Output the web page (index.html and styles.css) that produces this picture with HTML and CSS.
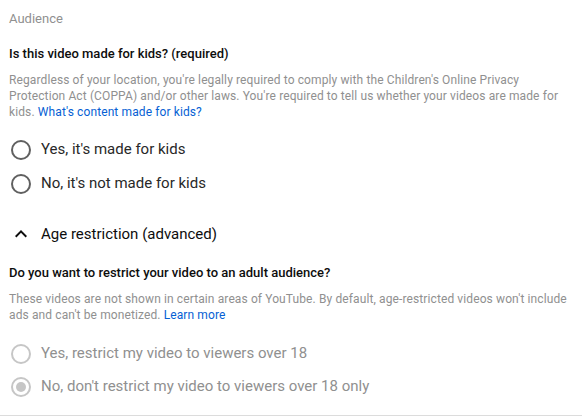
FILE: index.html
```html
<!DOCTYPE html>
<html>
<head>
<meta charset="utf-8">
<link rel="stylesheet" href="styles.css">
</head>
<body>
<div class="page">
  <div class="section-label">Audience</div>

  <h2 class="question">Is this video made for kids? (required)</h2>
  <p class="desc">Regardless of your location, you're legally required to comply with the Children's Online Privacy Protection Act (COPPA) and/or other laws. You're required to tell us whether your videos are made for kids. <a class="link" href="#">What's content made for kids?</a></p>

  <div class="radios kids">
    <div class="radio"><span class="circle"></span><span class="label">Yes, it's made for kids</span></div>
    <div class="radio"><span class="circle"></span><span class="label">No, it's not made for kids</span></div>
  </div>

  <div class="toggle">
    <svg class="chevron" width="24" height="24" viewBox="0 0 24 24"><path d="M7.4 15.4 12 10.8l4.6 4.6L18 14l-6-6-6 6z" fill="#0d0d0d"/></svg>
    <span class="toggle-label">Age restriction (advanced)</span>
  </div>

  <h2 class="question q2">Do you want to restrict your video to an adult audience?</h2>
  <p class="desc">These videos are not shown in certain areas of YouTube. By default, age-restricted videos won't include ads and can't be monetized. <a class="link" href="#">Learn more</a></p>

  <div class="radios age disabled">
    <div class="radio"><span class="circle"></span><span class="label">Yes, restrict my video to viewers over 18</span></div>
    <div class="radio"><span class="circle checked"></span><span class="label">No, don't restrict my video to viewers over 18 only</span></div>
  </div>
</div>
</body>
</html>
```

FILE: styles.css
```css
html, body {
  margin: 0;
  padding: 0;
  background: #fff;
}
body {
  font-family: Roboto, "Noto Sans", Arial, sans-serif;
  color: #0d0d0d;
}
.page {
  padding: 10px 11px 0 9px;
  height: 405px;
  border-bottom: 1px solid #dcdcdc;
}
.section-label {
  font-size: 13px;
  line-height: 18px;
  color: #909090;
}
.question {
  margin: 17px 0 0 0;
  font-size: 13px;
  line-height: 18px;
  font-weight: 500;
  color: #0d0d0d;
}
.q2 {
  margin-top: 18px;
}
.desc {
  margin: 9px 0 0 0;
  font-size: 12px;
  letter-spacing: 0.11px;
  line-height: 16px;
  color: #909090;
}
.link {
  color: #065fd4;
  text-decoration: none;
}
.radios {
  display: flex;
  flex-direction: column;
}
.radios.kids {
  margin-top: 20px;
  gap: 14px;
}
.radios.age {
  margin-top: 21px;
  gap: 13px;
}
.radio {
  display: flex;
  align-items: center;
  gap: 10px;
  height: 20px;
}
.circle {
  box-sizing: border-box;
  width: 20px;
  height: 20px;
  margin-left: 2px;
  border: 2px solid #606060;
  border-radius: 50%;
  position: relative;
  flex: none;
}
.label {
  font-size: 15px;
  line-height: 20px;
  color: #282828;
  position: relative;
  top: -1px;
}
.disabled .circle {
  border-color: #c6c6c6;
}
.disabled .label {
  color: #909090;
}
.circle.checked::after {
  content: "";
  position: absolute;
  left: 3px;
  top: 3px;
  width: 10px;
  height: 10px;
  border-radius: 50%;
  background: #c6c6c6;
}
.toggle {
  margin-top: 28px;
  display: flex;
  align-items: center;
  gap: 8px;
  height: 24px;
}
.chevron {
  flex: none;
}
.toggle-label {
  font-size: 15px;
  line-height: 20px;
  color: #0d0d0d;
}
```
